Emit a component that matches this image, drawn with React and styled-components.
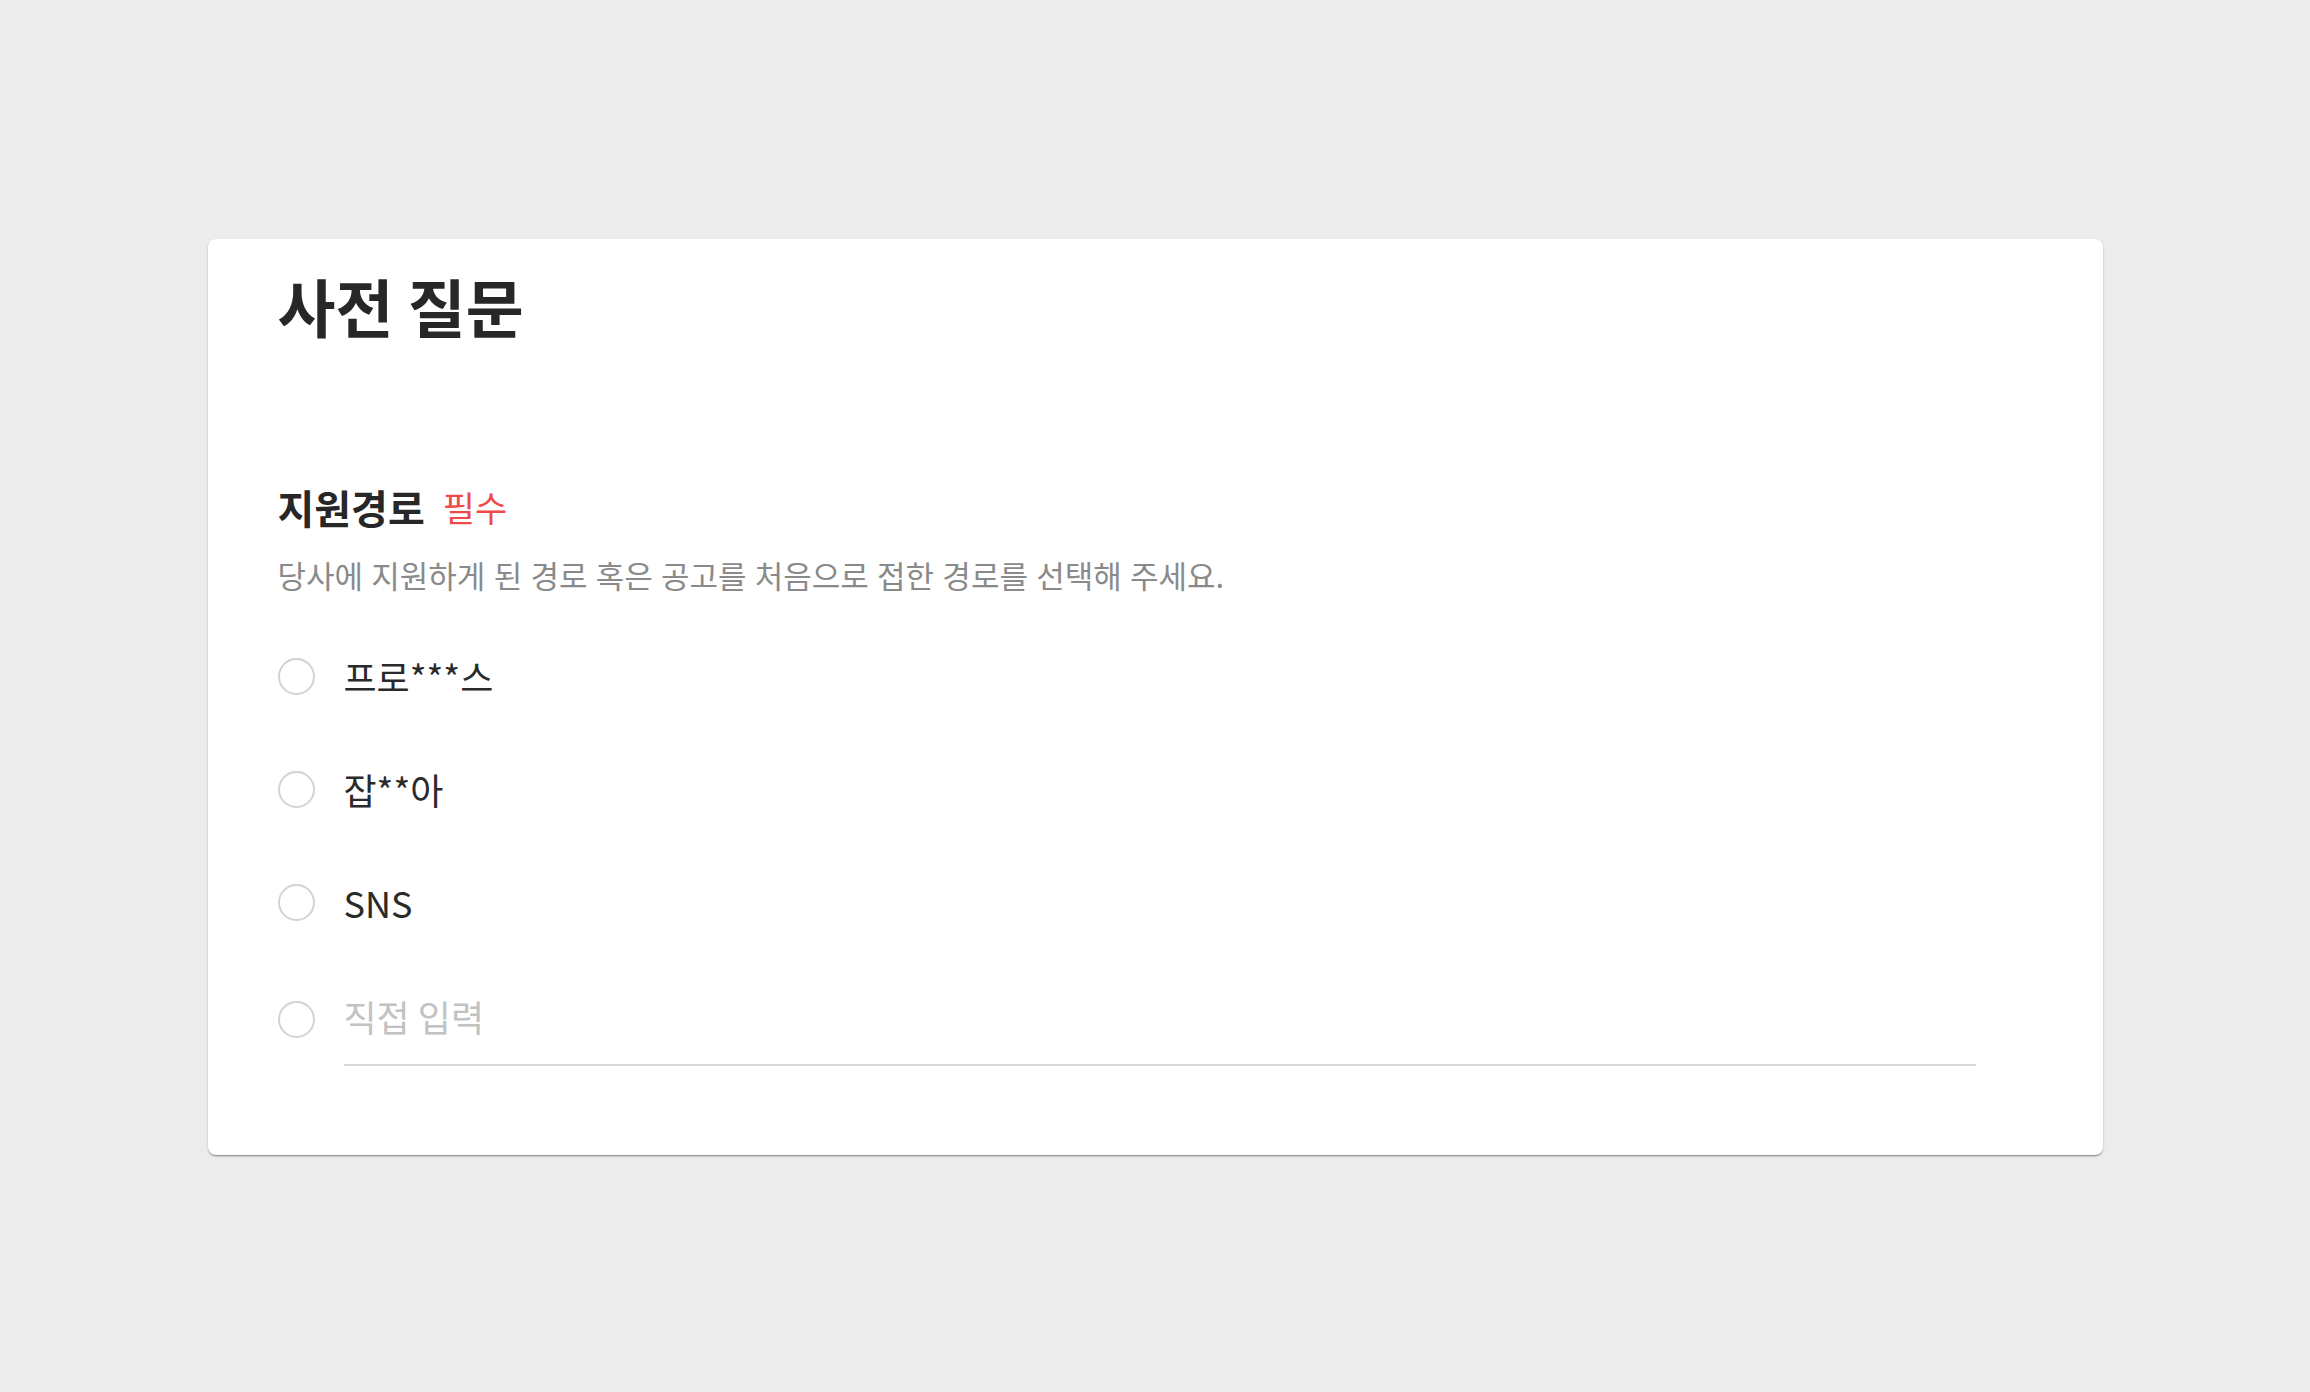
import React from "react";
import styled, { createGlobalStyle } from "styled-components";

const GlobalStyle = createGlobalStyle`
  html, body {
    margin: 0;
    padding: 0;
    background: #ececec;
  }
  body {
    font-family: "Noto Sans CJK KR", "Noto Sans", sans-serif;
    color: #262626;
  }
  * { box-sizing: border-box; }
`;

const Page = styled.div`
  min-height: 1392px;
  padding-top: 239px;
  display: flex;
  justify-content: center;
  align-items: flex-start;
`;

const Card = styled.section`
  width: 1895px;
  background: #fff;
  border-radius: 8px;
  box-shadow: 0px 2px 2px -1px rgba(0, 0, 0, 0.28),
    0px 1px 1px 0px rgba(0, 0, 0, 0.14), 0px 1px 3px 0px rgba(0, 0, 0, 0.12);
  padding: 30px 127px 89px 70px;
`;

const Title = styled.h1`
  margin: 0;
  font-size: 63px;
  line-height: 72px;
  font-weight: 700;
  color: #272727;
`;

const Section = styled.div`
  margin-top: 144px;
`;

const QuestionHead = styled.div`
  display: flex;
  align-items: center;
  gap: 18px;
  height: 44px;
`;

const QuestionTitle = styled.h2`
  margin: 0;
  font-size: 40px;
  line-height: 44px;
  font-weight: 700;
  color: #272727;
`;

const Required = styled.span`
  font-size: 35px;
  line-height: 44px;
  font-weight: 400;
  color: #f04b4b;
`;

const Description = styled.p`
  margin: 26px 0 0;
  font-size: 31px;
  line-height: 40px;
  word-spacing: 1.3px;
  color: #8a8a8a;
  font-weight: 400;
`;

const Options = styled.div`
  margin-top: 51px;
  display: flex;
  flex-direction: column;
  gap: 53px;
`;

const Option = styled.label`
  display: flex;
  align-items: ${(p) => (p.$input ? "flex-start" : "center")};
  gap: 29px;
  height: ${(p) => (p.$input ? "auto" : "60px")};
  margin-top: ${(p) => (p.$input ? "7px" : "0")};
  cursor: pointer;
`;

const Circle = styled.span`
  flex: none;
  width: 37px;
  height: 37px;
  border-radius: 50%;
  border: 2px solid #d3d3d3;
  margin-top: ${(p) => (p.$input ? "9px" : "0")};
`;

const Label = styled.span`
  font-size: 36px;
  line-height: 48px;
  color: #2a2a2a;
  font-weight: 400;
`;

const TextInput = styled.input`
  flex: 1;
  min-width: 0;
  border: none;
  border-bottom: 2px solid #d8d8d8;
  outline: none;
  padding: 0 0 24px;
  height: 74px;
  font-family: "Noto Sans CJK KR", "Noto Sans", sans-serif;
  font-size: 36px;
  line-height: 48px;
  color: #2a2a2a;
  background: transparent;
  &::placeholder {
    color: #c2c2c2;
  }
`;

const options = ["프로***스", "잡**아", "SNS"];

export default function App() {
  return (
    <>
      <GlobalStyle />
      <Page>
        <Card>
          <Title>사전 질문</Title>
          <Section>
            <QuestionHead>
              <QuestionTitle>지원경로</QuestionTitle>
              <Required>필수</Required>
            </QuestionHead>
            <Description>
              당사에 지원하게 된 경로 혹은 공고를 처음으로 접한 경로를 선택해 주세요.
            </Description>
            <Options>
              {options.map((o) => (
                <Option key={o}>
                  <Circle />
                  <Label>{o}</Label>
                </Option>
              ))}
              <Option $input>
                <Circle $input />
                <TextInput placeholder="직접 입력" />
              </Option>
            </Options>
          </Section>
        </Card>
      </Page>
    </>
  );
}
